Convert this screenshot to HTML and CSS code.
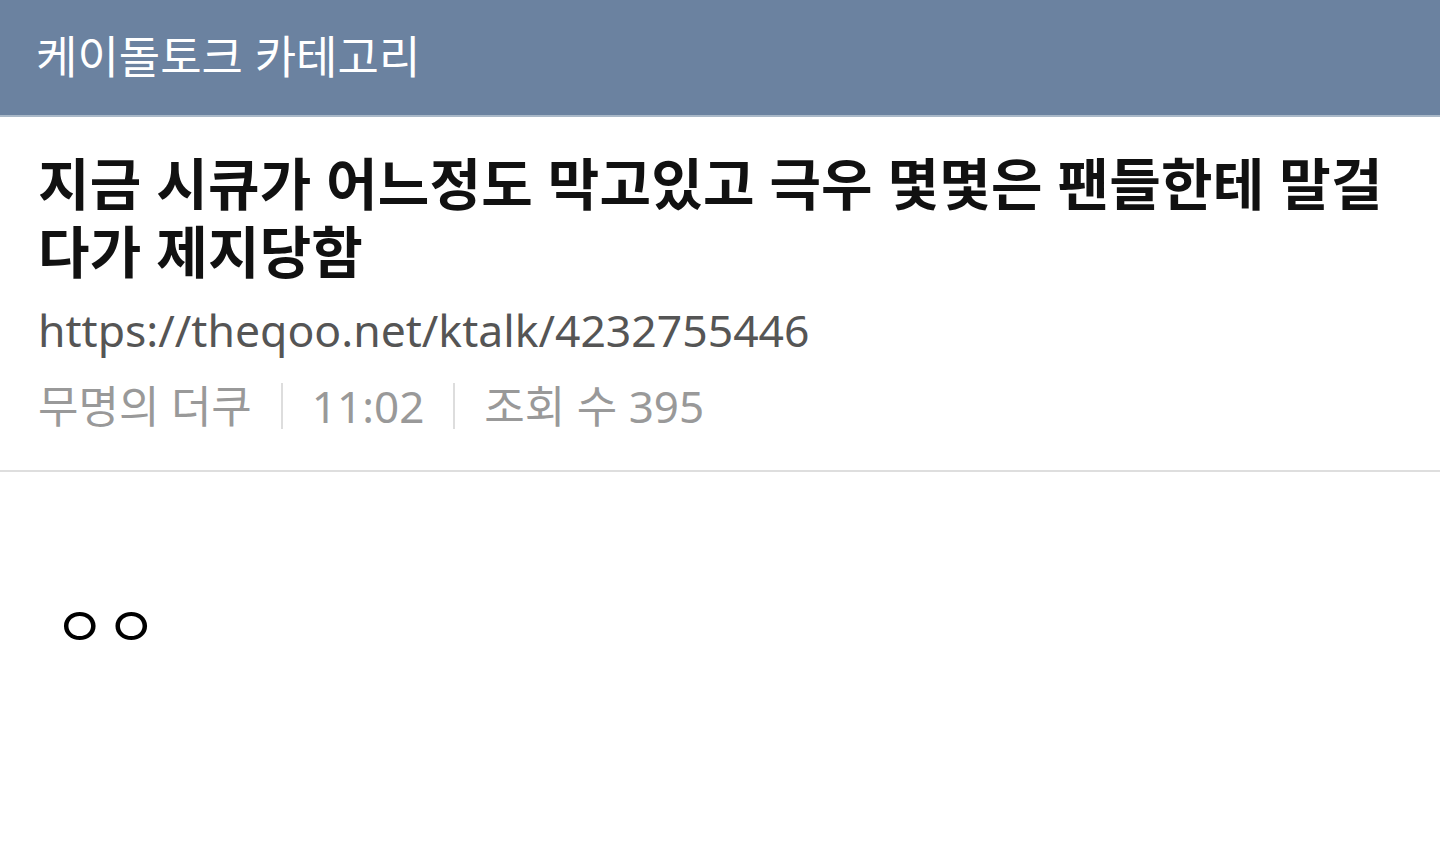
FILE: index.html
```html
<!DOCTYPE html>
<html lang="ko">
<head>
<meta charset="utf-8">
<link rel="stylesheet" href="styles.css">
</head>
<body>
<header class="topbar">케이돌토크 카테고리</header>
<section class="post-head">
  <h1 class="title">지금 시큐가 어느정도 막고있고 극우 몇몇은 팬들한테 말걸다가 제지당함</h1>
  <div class="url">https://theqoo.net/ktalk/4232755446</div>
  <div class="meta">
    <span>무명의 더쿠</span>
    <span class="sep"></span>
    <span>11:02</span>
    <span class="sep"></span>
    <span>조회 수 395</span>
  </div>
</section>
<section class="post-body">ㅇㅇ</section>
</body>
</html>
```

FILE: styles.css
```css
html, body {
  margin: 0;
  padding: 0;
  background: #fff;
  font-family: "Noto Sans", "Noto Sans CJK KR", sans-serif;
}
.topbar {
  height: 117px;
  background: #6b82a0;
  color: #fff;
  font-size: 45px;
  line-height: 113px;
  padding-left: 36px;
  box-sizing: border-box;
  border-bottom: 2px solid #a9b8c8;
}
.post-head {
  padding: 32px 38px 0 38px;
  border-bottom: 2px solid #dedede;
  height: 355px;
  box-sizing: border-box;
}
.title {
  margin: 0;
  font-size: 56px;
  font-weight: 700;
  line-height: 68px;
  letter-spacing: 0.2px;
  color: #111;
}
.url {
  margin-top: 14px;
  font-size: 44.5px;
  line-height: 62px;
  color: #555;
}
.meta {
  margin-top: 15px;
  display: flex;
  align-items: center;
  gap: 29px;
  font-size: 44px;
  line-height: 60px;
  color: #999;
}
.sep {
  width: 2px;
  height: 46px;
  background: #ddd;
}
.post-body {
  padding: 110px 54px;
  font-size: 56px;
  color: #000;
}
```
